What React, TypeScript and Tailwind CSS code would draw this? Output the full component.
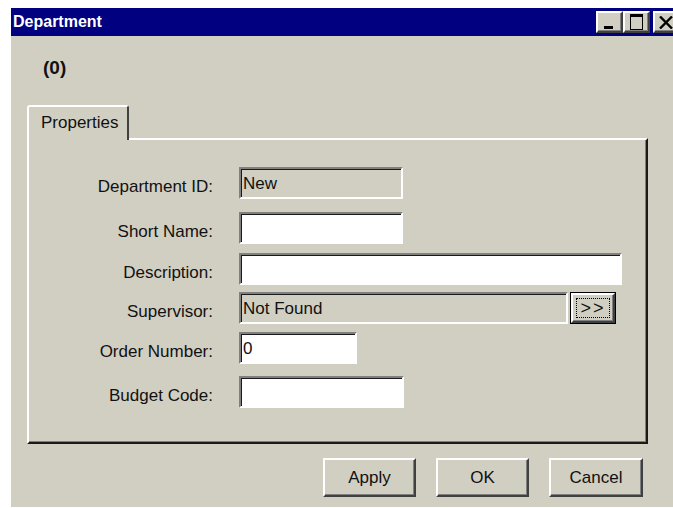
import type { ReactNode } from 'react';

// Classic 3D edges
const raised =
  'border-2 border-t-white border-l-white border-r-[#404040] border-b-[#404040] shadow-[inset_-1px_-1px_0_#808080]';
const sunken =
  'border-2 border-t-[#808080] border-l-[#808080] border-r-white border-b-white shadow-[inset_1px_1px_0_#1a1a1a]';

type FieldProps = {
  label: string;
  mt: string;
  children: ReactNode;
};

function Field({ label, mt, children }: FieldProps) {
  return (
    <div className={`flex h-[32px] items-center ${mt}`}>
      <label className="w-[184px] shrink-0 pt-2 text-right text-[17px] leading-[20px] text-[#111]">
        {label}
      </label>
      <div className="ml-[26px] flex h-full items-stretch">{children}</div>
    </div>
  );
}

function TextBox({ w, value, readOnly }: { w: string; value?: string; readOnly?: boolean }) {
  return (
    <div
      className={`${sunken} ${w} flex h-full items-center pl-[2px] text-[17px] leading-none text-[#111] ${
        readOnly ? 'bg-[#d1cfc2]' : 'bg-white'
      }`}
    >
      {value}
    </div>
  );
}

function CaptionButton({ children, className }: { children: ReactNode; className?: string }) {
  return (
    <div className={`${raised} relative h-[22px] bg-[#d1cfc2] ${className ?? ''}`}>{children}</div>
  );
}

function DialogButton({ children, w }: { children: ReactNode; w: string }) {
  return (
    <button
      type="button"
      className={`${raised} ${w} flex h-[39px] items-center justify-center bg-[#d1cfc2] text-[17px] text-[#111]`}
    >
      {children}
    </button>
  );
}

export default function App() {
  return (
    <div className="h-[508px] w-[673px] overflow-hidden bg-white pl-[11px] pt-[8px] font-['Liberation_Sans',Arial,sans-serif]">
      <div className="flex h-[499px] w-[675px] flex-col bg-[#d1cfc2]">
        {/* title bar */}
        <div className="flex h-[28px] shrink-0 items-center bg-[#000080] pl-[2px] pr-[7px]">
          <span className="text-[16px] font-bold leading-none text-white">Department</span>
          <div className="ml-auto flex">
            <CaptionButton className="w-[27px]">
              <span className="absolute left-[6px] top-[13px] h-[3px] w-[9px] bg-black" />
            </CaptionButton>
            <CaptionButton className="w-[27px]">
              <span className="absolute left-[5px] top-[1px] h-[16px] w-[13px] border border-t-[3px] border-black" />
            </CaptionButton>
            <CaptionButton className="ml-[3px] w-[26px]">
              <svg className="absolute left-[3px] top-[3px]" width="16" height="13" viewBox="0 0 16 13">
                <path d="M2 0.5 L14 12.5 M14 0.5 L2 12.5" stroke="#000" strokeWidth="2.4" />
              </svg>
            </CaptionButton>
          </div>
        </div>

        <div className="flex flex-col pl-[16px]">
          <div className="mt-[20px] h-[24px] pl-[16px] text-[19px] font-bold leading-[24px] text-[#111]">
            (0)
          </div>

          {/* tab strip */}
          <div className="relative z-10 mt-[25px] -mb-[2px] flex">
            <div className="flex h-[35px] w-[102px] items-start rounded-t-[3px] border-l-2 border-r-2 border-t-2 border-l-white border-r-[#404040] border-t-white bg-[#d1cfc2] pl-[12px] pt-[6px] text-[17px] leading-[20px] text-[#111]">
              Properties
            </div>
          </div>

          {/* tab page */}
          <div className="h-[306px] w-[621px] border-2 border-b-[#1a1a1a] border-l-white border-r-[#1a1a1a] border-t-white pt-[27px] shadow-[inset_-1px_-1px_0_#808080]">
            <Field label="Department ID:" mt="mt-0">
              <TextBox w="w-[164px]" value="New" readOnly />
            </Field>
            <Field label="Short Name:" mt="mt-[13px]">
              <TextBox w="w-[164px]" />
            </Field>
            <Field label="Description:" mt="mt-[9px]">
              <TextBox w="w-[383px]" />
            </Field>
            <Field label="Supervisor:" mt="mt-[7px]">
              <TextBox w="w-[329px]" value="Not Found" readOnly />
              <button
                type="button"
                className="ml-[2px] h-[32px] w-[46px] border border-black bg-[#d1cfc2]"
              >
                <div className={`${raised} flex h-full w-full items-center justify-center p-[3px]`}>
                  <div className="flex h-full w-full items-center justify-center border border-dotted border-black text-[18px] leading-none tracking-[2px] text-[#111]">
                    &gt;&gt;
                  </div>
                </div>
              </button>
            </Field>
            <Field label="Order Number:" mt="mt-[8px]">
              <TextBox w="w-[118px]" value="0" />
            </Field>
            <Field label="Budget Code:" mt="mt-[12px]">
              <TextBox w="w-[165px]" />
            </Field>
          </div>

          {/* dialog buttons */}
          <div className="mt-[14px] flex w-[621px] justify-end gap-[20px] pr-[5px]">
            <DialogButton w="w-[93px]">Apply</DialogButton>
            <DialogButton w="w-[93px]">OK</DialogButton>
            <DialogButton w="w-[94px]">Cancel</DialogButton>
          </div>
        </div>
      </div>
    </div>
  );
}
